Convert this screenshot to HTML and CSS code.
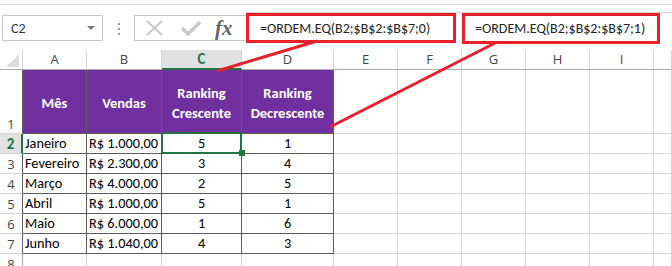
FILE: index.html
```html
<!DOCTYPE html>
<html lang="pt-BR">
<head>
  <meta charset="UTF-8">
  <title>ORDEM.EQ</title>
  <link rel="stylesheet" href="styles.css">
</head>
<body>
  <div class="ribbon-edge"></div>

  <div class="formula-bar">
    <div class="name-box">
      <span>C2</span>
      <span class="caret"></span>
    </div>
    <div class="grip"><i></i><i></i><i></i></div>
    <div class="tools">
      <svg class="tool" width="20" height="16" viewBox="0 0 20 16"><path d="M2 1 L17 15 M17 1 L2 15" stroke="#c8c8c8" stroke-width="2" fill="none"/></svg>
      <svg class="tool" width="20" height="16" viewBox="0 0 20 16"><path d="M1 8 L7 14 L19 2" stroke="#c8c8c8" stroke-width="3.5" fill="none"/></svg>
      <span class="fx">fx</span>
    </div>
    <div class="formula-input">
      <div class="callout callout-first">=ORDEM.EQ(B2;$B$2:$B$7;0)</div>
      <div class="callout callout-second">=ORDEM.EQ(B2;$B$2:$B$7;1)</div>
    </div>
  </div>

  <div class="sheet">
    <div class="corner"><svg width="13" height="13" viewBox="0 0 13 13"><path d="M13 0 L13 13 L0 13 Z" fill="#dcdcdc"/></svg></div>
    <div class="colh">A</div>
    <div class="colh">B</div>
    <div class="colh active">C</div>
    <div class="colh">D</div>
    <div class="colh">E</div>
    <div class="colh">F</div>
    <div class="colh">G</div>
    <div class="colh">H</div>
    <div class="colh">I</div>
    <div class="colh"></div>

    <div class="rowh in-table">1</div>
    <div class="cell head">Mês</div>
    <div class="cell head">Vendas</div>
    <div class="cell head">Ranking<br>Crescente</div>
    <div class="cell head">Ranking<br>Decrescente</div>
    <div class="cell"></div><div class="cell"></div><div class="cell"></div><div class="cell"></div><div class="cell"></div><div class="cell"></div>

    <div class="rowh in-table active">2</div>
    <div class="cell data left">Janeiro</div>
    <div class="cell data money">R$ 1.000,00</div>
    <div class="cell data mid selected">5</div>
    <div class="cell data mid">1</div>
    <div class="cell"></div><div class="cell"></div><div class="cell"></div><div class="cell"></div><div class="cell"></div><div class="cell"></div>

    <div class="rowh in-table">3</div>
    <div class="cell data left">Fevereiro</div>
    <div class="cell data money">R$ 2.300,00</div>
    <div class="cell data mid">3</div>
    <div class="cell data mid">4</div>
    <div class="cell"></div><div class="cell"></div><div class="cell"></div><div class="cell"></div><div class="cell"></div><div class="cell"></div>

    <div class="rowh in-table">4</div>
    <div class="cell data left">Março</div>
    <div class="cell data money">R$ 4.000,00</div>
    <div class="cell data mid">2</div>
    <div class="cell data mid">5</div>
    <div class="cell"></div><div class="cell"></div><div class="cell"></div><div class="cell"></div><div class="cell"></div><div class="cell"></div>

    <div class="rowh in-table">5</div>
    <div class="cell data left">Abril</div>
    <div class="cell data money">R$ 1.000,00</div>
    <div class="cell data mid">5</div>
    <div class="cell data mid">1</div>
    <div class="cell"></div><div class="cell"></div><div class="cell"></div><div class="cell"></div><div class="cell"></div><div class="cell"></div>

    <div class="rowh in-table">6</div>
    <div class="cell data left">Maio</div>
    <div class="cell data money">R$ 6.000,00</div>
    <div class="cell data mid">1</div>
    <div class="cell data mid">6</div>
    <div class="cell"></div><div class="cell"></div><div class="cell"></div><div class="cell"></div><div class="cell"></div><div class="cell"></div>

    <div class="rowh in-table">7</div>
    <div class="cell data left">Junho</div>
    <div class="cell data money">R$ 1.040,00</div>
    <div class="cell data mid">4</div>
    <div class="cell data mid">3</div>
    <div class="cell"></div><div class="cell"></div><div class="cell"></div><div class="cell"></div><div class="cell"></div><div class="cell"></div>

    <div class="rowh">8</div>
    <div class="cell"></div><div class="cell"></div><div class="cell"></div><div class="cell"></div><div class="cell"></div>
    <div class="cell"></div><div class="cell"></div><div class="cell"></div><div class="cell"></div><div class="cell"></div>
  </div>

  <!-- setas de anotação -->
  <svg class="arrows" width="672" height="266" viewBox="0 0 672 266">
    <line x1="217" y1="71" x2="317" y2="41" />
    <line x1="330" y1="127" x2="497" y2="42" />
  </svg>
</body>
</html>
```

FILE: styles.css
```css
:root {
  --grid-line: #d4d4d4;
  --header-line: #ababab;
  --table-line: #5b5b5b;
  --purple: #7030a0;
  --excel-green: #217346;
  --callout-red: #e8202a;
  --header-text: #444;
}

body {
  margin: 0;
  width: 672px;
  height: 266px;
  overflow: hidden;
  background: #fff;
  font-family: Carlito, Lato, 'Liberation Sans', sans-serif;
  color: #000;
  position: relative;
}

.ribbon-edge {
  height: 4px;
  border-bottom: 1px solid var(--grid-line);
}

/* barra de fórmulas */
.formula-bar {
  height: 45px;
  display: flex;
  align-items: flex-start;
}

.name-box {
  margin: 10px 0 0 2px;
  width: 101px;
  height: 26px;
  box-sizing: border-box;
  border: 1px solid #c6c6c6;
  display: flex;
  align-items: center;
  justify-content: space-between;
  padding: 0 7px 0 8px;
  font-size: 14px;
  color: #333;
}

.caret {
  width: 0;
  height: 0;
  border-left: 4px solid transparent;
  border-right: 4px solid transparent;
  border-top: 4px solid #777;
}

.grip {
  margin: 18px 0 0 0;
  width: 31px;
  display: flex;
  flex-direction: column;
  align-items: center;
  gap: 3px;
}

.grip i {
  width: 2px;
  height: 2px;
  background: #9a9a9a;
}

.tools {
  margin-top: 10px;
  width: 112px;
  height: 26px;
  box-sizing: border-box;
  border: 1px solid #c6c6c6;
  border-right: none;
  display: flex;
  align-items: center;
  padding-left: 10px;
  gap: 16px;
}

.fx {
  font-family: 'Liberation Serif', 'DejaVu Serif', serif;
  font-style: italic;
  font-weight: bold;
  font-size: 21px;
  color: #666;
  margin-left: -2px;
}

.formula-input {
  flex: 1;
  margin-top: 8px;
  height: 31px;
  border-top: 1px solid var(--grid-line);
  display: flex;
  align-items: flex-start;
  gap: 6px;
  position: relative;
  top: -1px;
}

.callout {
  box-sizing: border-box;
  border: 3px solid var(--callout-red);
  font-size: 14px;
  color: #222;
  display: flex;
  align-items: center;
  white-space: nowrap;
}

.callout-first {
  width: 210px;
  height: 30px;
  padding-left: 11px;
}

.callout-second {
  width: 198px;
  height: 31px;
  padding-left: 10px;
}

/* planilha */
.sheet {
  display: grid;
  grid-template-columns: 23px 64px 75px 80px 92px 64px 64px 64px 64px 64px 1fr;
  grid-template-rows: 20px 64px repeat(7, 20px);
}

.sheet > div {
  box-sizing: border-box;
}

.corner {
  border-right: 1px solid var(--grid-line);
  border-bottom: 1px solid var(--header-line);
  display: flex;
  align-items: flex-end;
  justify-content: flex-end;
  padding: 0 3px 2px 0;
}

.corner svg {
  display: block;
}

.colh {
  border-right: 1px solid var(--grid-line);
  border-bottom: 1px solid var(--header-line);
  text-align: center;
  font-family: 'Open Sans', 'Noto Sans', sans-serif;
  font-size: 13px;
  line-height: 19px;
  color: var(--header-text);
}

.colh.active {
  background: #e1e1e1;
  color: var(--excel-green);
  font-weight: bold;
  border-bottom: 2px solid var(--excel-green);
  font-family: Carlito, Lato, sans-serif;
  font-size: 15px;
}

.rowh {
  border-right: 1px solid var(--header-line);
  border-bottom: 1px solid var(--grid-line);
  display: flex;
  align-items: flex-end;
  justify-content: center;
  font-family: 'Open Sans', 'Noto Sans', sans-serif;
  font-size: 13px;
  line-height: 18px;
  color: var(--header-text);
}

.rowh.in-table {
  border-right-color: var(--table-line);
}

.rowh.active {
  background: #e1e1e1;
  color: var(--excel-green);
  font-weight: bold;
  border-right: 2px solid var(--excel-green);
  font-family: Carlito, Lato, sans-serif;
  font-size: 15px;
}

.cell {
  border-right: 1px solid var(--grid-line);
  border-bottom: 1px solid var(--grid-line);
}

.cell.head {
  background: var(--purple);
  color: #fff;
  font-weight: bold;
  font-size: 14.5px;
  line-height: 20px;
  text-align: center;
  display: flex;
  align-items: center;
  justify-content: center;
  padding-top: 2px;
  border-right: 1px solid var(--table-line);
  border-bottom: 1px solid var(--table-line);
}

.cell.data {
  font-size: 14.3px;
  line-height: 19px;
  white-space: nowrap;
  border-right: 1px solid var(--table-line);
  border-bottom: 1px solid var(--table-line);
}

.cell.left {
  padding-left: 2px;
}

.cell.money {
  text-align: right;
  padding-right: 3px;
}

.cell.mid {
  text-align: center;
}

.cell.selected {
  position: relative;
}

.cell.selected::after {
  content: '';
  position: absolute;
  top: -2px;
  left: -1px;
  right: -1px;
  bottom: -1px;
  border: 2px solid var(--excel-green);
}

.cell.selected::before {
  content: '';
  position: absolute;
  right: -4px;
  bottom: -3px;
  width: 6px;
  height: 6px;
  background: var(--excel-green);
  z-index: 1;
}

.arrows {
  position: absolute;
  left: 0;
  top: 0;
  pointer-events: none;
}

.arrows line {
  stroke: var(--callout-red);
  stroke-width: 3;
}
```
